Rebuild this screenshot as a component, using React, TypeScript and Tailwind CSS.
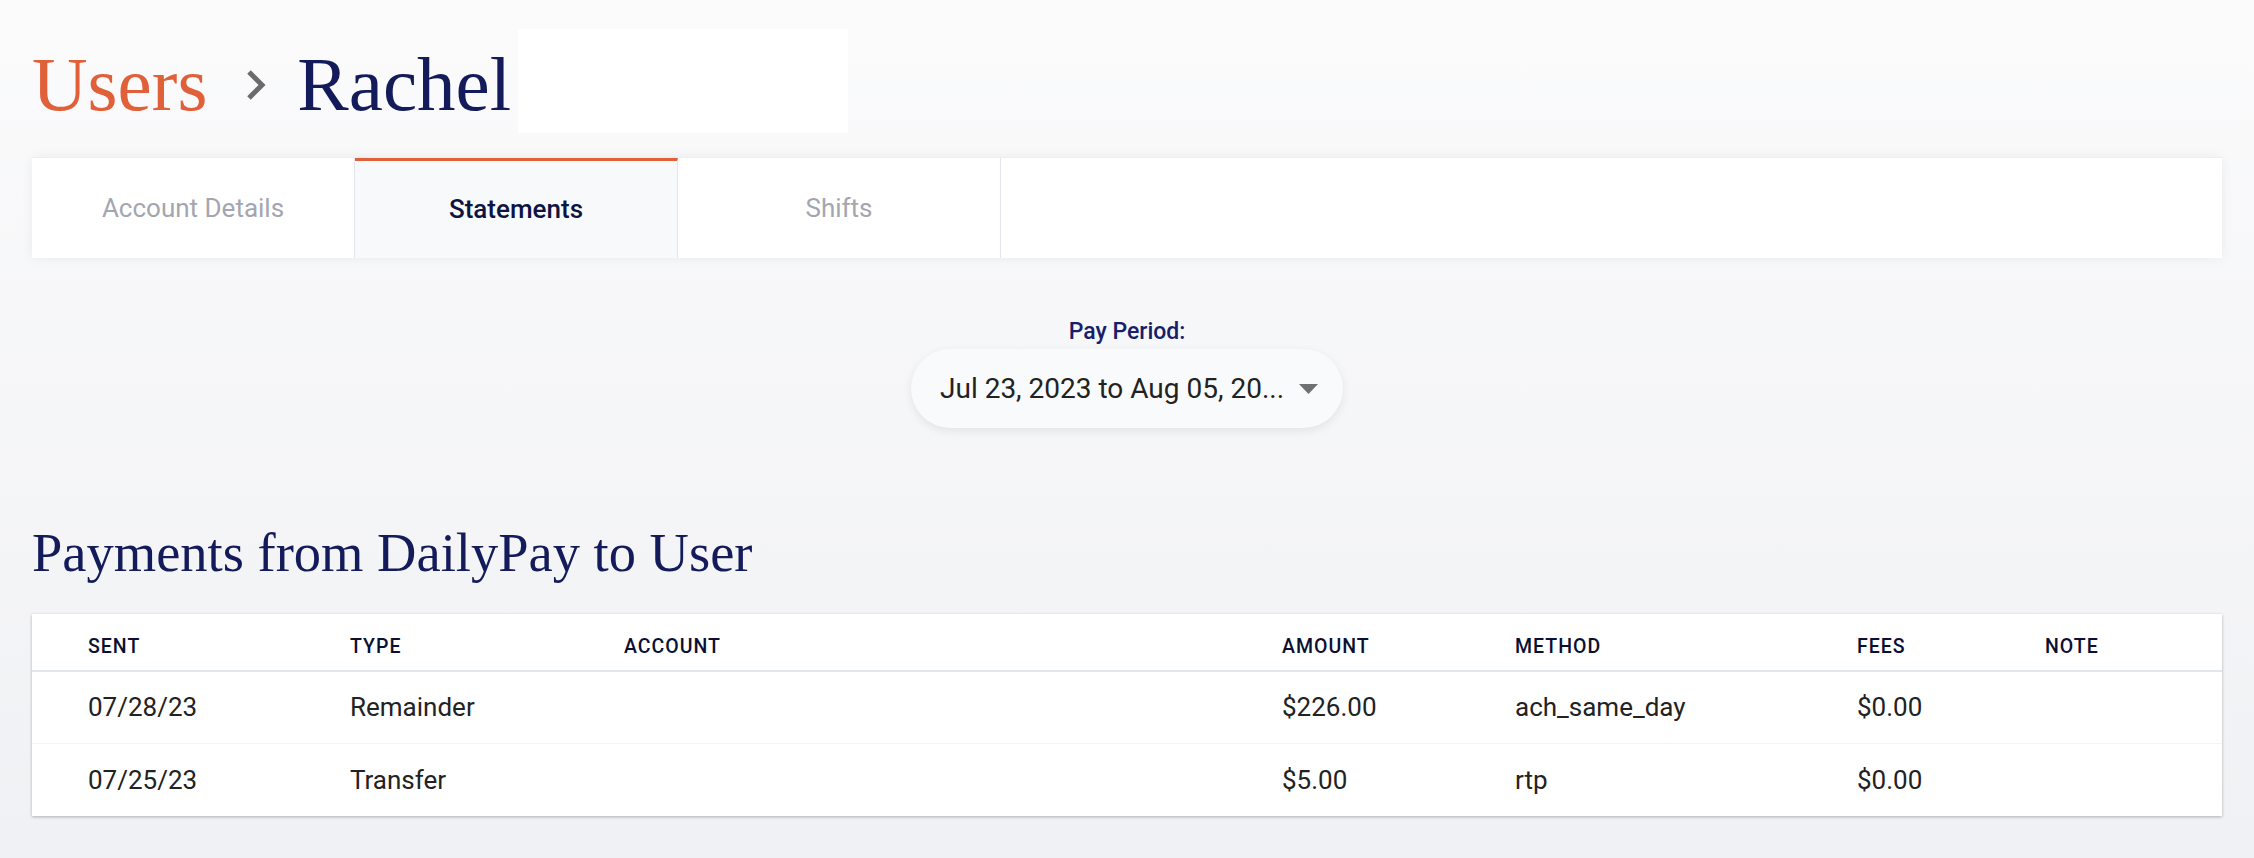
import React from "react";

const serif = "font-['Liberation_Serif',_'Times_New_Roman',_serif]";
const sans = "font-['Roboto',_'Liberation_Sans',_sans-serif]";

const tabs = [
  { label: "Account Details", active: false },
  { label: "Statements", active: true },
  { label: "Shifts", active: false },
];

const columns = ["Sent", "Type", "Account", "Amount", "Method", "Fees", "Note"];

const rows = [
  { sent: "07/28/23", type: "Remainder", account: "", amount: "$226.00", method: "ach_same_day", fees: "$0.00", note: "" },
  { sent: "07/25/23", type: "Transfer", account: "", amount: "$5.00", method: "rtp", fees: "$0.00", note: "" },
];

const grid = "grid grid-cols-[262px_274px_658px_233px_342px_188px_1fr] pl-[56px]";

function Chevron() {
  return (
    <svg width="22" height="32" viewBox="0 0 22 32" className="shrink-0">
      <polyline points="4,3 17,16 4,29" fill="none" stroke="#6b6b6b" strokeWidth="5" />
    </svg>
  );
}

function Caret() {
  return (
    <svg width="19" height="10" viewBox="0 0 19 10" className="shrink-0">
      <polygon points="0,0 19,0 9.5,10" fill="#707070" />
    </svg>
  );
}

export default function App() {
  return (
    <div className={`h-[858px] w-full overflow-hidden bg-gradient-to-b from-[#fbfbfc] to-[#f0f1f4] px-[32px] pt-[29px] ${sans}`}>
      {/* breadcrumb */}
      <div className="flex h-[104px] items-center">
        <span className={`${serif} pt-[6px] text-[77px] leading-none text-[#e0603a]`}>Users</span>
        <span className="ml-[38px] mr-[30px] pt-[8px]">
          <Chevron />
        </span>
        <span className={`${serif} pt-[6px] text-[77px] leading-none text-[#141b5a]`}>Rachel</span>
        <div className="ml-[7px] h-[104px] w-[330px] bg-white" />
      </div>

      {/* tabs */}
      <div className="mt-[24px] flex h-[101px] border-t border-[#eceef3] bg-white shadow-[0_0_12px_rgba(20,30,60,0.06)]">
        {tabs.map((t) => (
          <div
            key={t.label}
            className={`flex w-[323px] items-center justify-center border-r border-[#e4e5ee] text-[26px] ${
              t.active
                ? "border-t-[3px] border-t-[#e0603a] bg-[#f8f9fb] font-medium text-[#0e1442]"
                : "text-[#a3a6b0]"
            }`}
          >
            {t.label}
          </div>
        ))}
      </div>

      {/* pay period */}
      <div className="mt-[60px] flex flex-col items-center">
        <div className="mb-[3px] text-[23px] font-medium leading-[28px] text-[#16206a]">Pay Period:</div>
        <div className="flex h-[79px] w-[432px] items-center justify-between rounded-full bg-[#f9fafb] pl-[29px] pr-[25px] shadow-[0_3px_10px_rgba(0,0,0,0.08)]">
          <span className="text-[28px] text-[#222]">Jul 23, 2023 to Aug 05, 20...</span>
          <Caret />
        </div>
      </div>

      {/* payments */}
      <h2 className={`${serif} mt-[92px] text-[54.5px] font-normal leading-[1.2] text-[#141b5a]`}>
        Payments from DailyPay to User
      </h2>

      <div className="mt-[29px] bg-white shadow-[0_1px_3px_rgba(0,0,0,0.28)]">
        <div className={`${grid} h-[58px] items-center border-b-2 border-[#e2e7ef] pt-[8px]`}>
          {columns.map((c) => (
            <div key={c} className="text-[19.5px] font-medium uppercase tracking-[1px] text-[#0b1033]">
              {c}
            </div>
          ))}
        </div>
        {rows.map((r, i) => (
          <div
            key={r.sent}
            className={`${grid} h-[72px] items-center text-[26px] text-[#222] ${i === 0 ? "border-b border-[#f2f3f6]" : ""}`}
          >
            <div>{r.sent}</div>
            <div>{r.type}</div>
            <div>{r.account}</div>
            <div>{r.amount}</div>
            <div>{r.method}</div>
            <div>{r.fees}</div>
            <div>{r.note}</div>
          </div>
        ))}
      </div>
    </div>
  );
}
